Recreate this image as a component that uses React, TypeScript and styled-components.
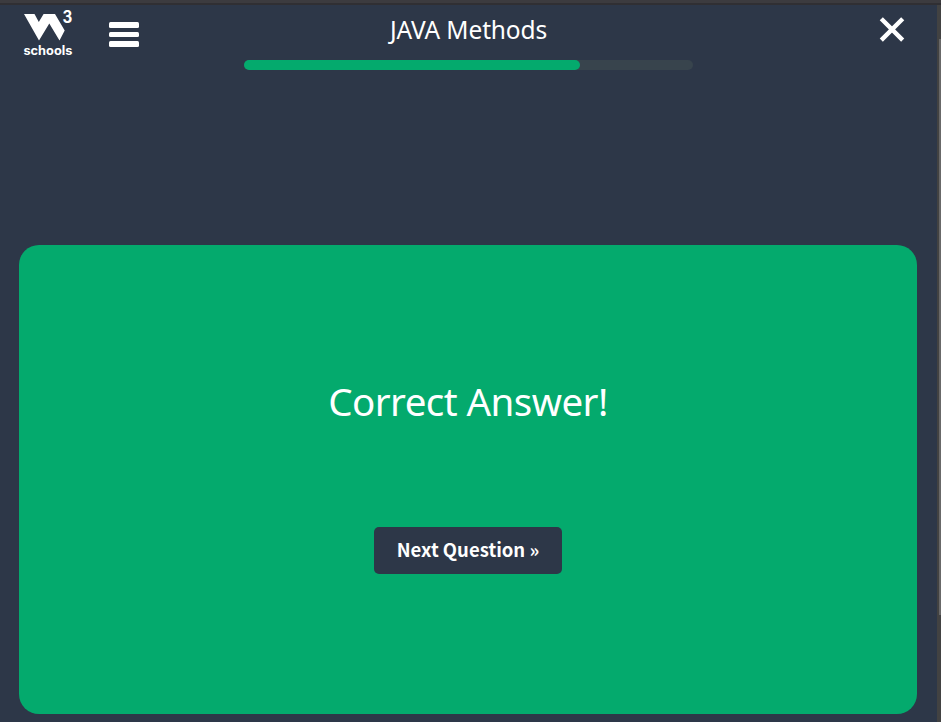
import React from "react";
import styled, { createGlobalStyle } from "styled-components";

const GlobalStyle = createGlobalStyle`
  * { box-sizing: border-box; }
  body { margin: 0; background: #2d3748; overflow: hidden; }
`;

const Window = styled.div`
  display: flex;
  flex-direction: column;
  width: 941px;
  height: 722px;
  overflow: hidden;
  color: #fff;
  font-family: "Noto Sans", "Open Sans", sans-serif;
`;

const WindowEdge = styled.div`
  flex: none;
  height: 5px;
  background: #3c3b3f;
  border-bottom: 2px solid #302f33;
`;

const Body = styled.div`
  display: flex;
  flex: 1;
  min-height: 0;
`;

const Page = styled.main`
  display: flex;
  flex-direction: column;
  width: 937px;
  background: #2d3748;
`;

const Header = styled.header`
  display: grid;
  grid-template-columns: 244px 449px 244px;
  height: 240px;
  align-items: start;
`;

const Brand = styled.div`
  display: flex;
  padding: 0 0 0 20px;
`;

const LogoMark = styled.svg`
  display: block;
  overflow: visible;
`;

const MenuButton = styled.button`
  display: flex;
  flex-direction: column;
  justify-content: flex-start;
  gap: 4px;
  width: 30px;
  height: 25px;
  margin: 17px 0 0 31px;
  padding: 0;
  border: 0;
  background: none;
`;

const MenuLine = styled.span`
  flex: none;
  width: 30px;
  height: 5.5px;
  border-radius: 1.5px;
  background: #fff;
`;

const Progress = styled.div`
  display: flex;
  flex-direction: column;
  align-items: center;
`;

const Title = styled.h1`
  margin: 0;
  height: 55px;
  padding-top: 8px;
  font-size: 24.5px;
  font-weight: 400;
  line-height: 33px;
  letter-spacing: -0.13px;
  white-space: nowrap;
`;

const Track = styled.div`
  width: 449px;
  height: 10px;
  border-radius: 5px;
  background: #38444d;
`;

const Fill = styled.div`
  width: 336px;
  height: 10px;
  border-radius: 5px;
  background: #04aa6d;
`;

const CloseButton = styled.button`
  justify-self: end;
  display: flex;
  margin: 12px 32px 0 0;
  padding: 0;
  border: 0;
  background: none;
`;

const Card = styled.section`
  display: flex;
  flex-direction: column;
  align-items: center;
  width: 898px;
  height: 469px;
  margin-left: 19px;
  border-radius: 20px;
  background: #04aa6d;
`;

const Message = styled.h2`
  margin: 129px 0 0;
  height: 153px;
  font-size: 38.5px;
  font-weight: 400;
  line-height: 54px;
  letter-spacing: -0.55px;
  white-space: nowrap;
`;

const NextButton = styled.button`
  width: 188px;
  height: 47px;
  padding: 0 0 3px;
  border: 0;
  border-radius: 5px;
  background: #2d3748;
  color: #fff;
  font: 700 18.5px/44px "Noto Sans CJK SC", sans-serif;
  white-space: nowrap;
`;

const Scrollbar = styled.div`
  width: 4px;
  padding: 34px 0 0 2px;
  background: #424242;
`;

const Thumb = styled.div`
  height: 576px;
  background: #686868;
`;

function Logo() {
  return (
    <LogoMark width="58" height="55" viewBox="20 5 58 55" fill="#fff">
      <path d="M24 14H34.5L38.8 22L43.6 14H55L64.7 30.6L59.5 40.5L49.3 23.5L39 40.5Z" />
      <text x="62.5" y="23" fontFamily="Inter, sans-serif" fontSize="17" fontWeight="700" textLength="9.8" lengthAdjust="spacingAndGlyphs">3</text>
      <text x="23.4" y="55" fontFamily="Inter, sans-serif" fontSize="12.6" fontWeight="700" textLength="49" lengthAdjust="spacingAndGlyphs">schools</text>
    </LogoMark>
  );
}

export default function App() {
  return (
    <>
      <GlobalStyle />
      <Window>
        <WindowEdge />
        <Body>
          <Page>
            <Header>
              <Brand>
                <Logo />
                <MenuButton aria-label="Menu">
                  <MenuLine />
                  <MenuLine />
                  <MenuLine />
                </MenuButton>
              </Brand>
              <Progress>
                <Title>JAVA Methods</Title>
                <Track>
                  <Fill />
                </Track>
              </Progress>
              <CloseButton aria-label="Close">
                <svg width="26" height="26" viewBox="0 0 26 26" stroke="#fff" strokeWidth="4.4">
                  <path d="M2.3 1.7L23.7 23.1M23.7 1.7L2.3 23.1" />
                </svg>
              </CloseButton>
            </Header>
            <Card>
              <Message>Correct Answer!</Message>
              <NextButton>Next Question »</NextButton>
            </Card>
          </Page>
          <Scrollbar>
            <Thumb />
          </Scrollbar>
        </Body>
      </Window>
    </>
  );
}
